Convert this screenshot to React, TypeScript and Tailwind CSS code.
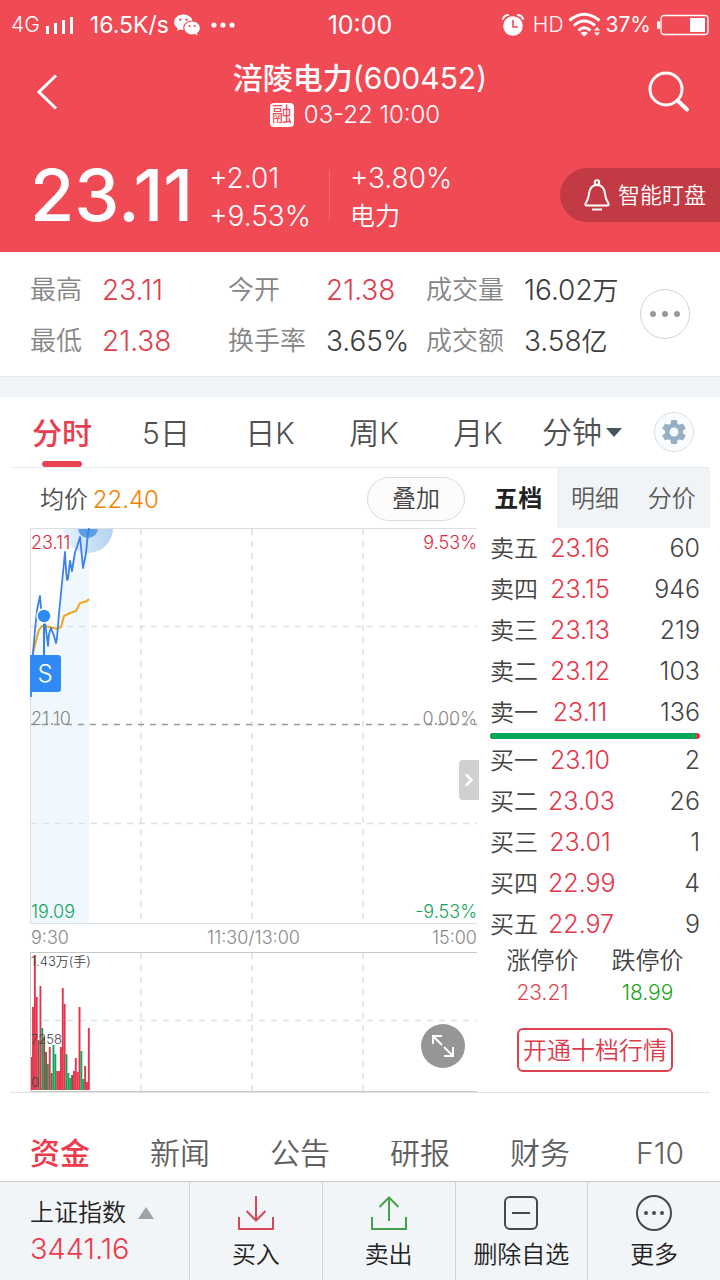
import React from "react";
import { MdSettings } from "react-icons/md";
import { RiWechatFill } from "react-icons/ri";

type Stat = { label: string; value: string; unit?: string; up?: boolean };

const stats: Stat[] = [
  { label: "最高", value: "23.11", up: true },
  { label: "今开", value: "21.38", up: true },
  { label: "成交量", value: "16.02", unit: "万" },
  { label: "最低", value: "21.38", up: true },
  { label: "换手率", value: "3.65%" },
  { label: "成交额", value: "3.58", unit: "亿" },
];

const asks = [
  ["卖五", "23.16", "60"],
  ["卖四", "23.15", "946"],
  ["卖三", "23.13", "219"],
  ["卖二", "23.12", "103"],
  ["卖一", "23.11", "136"],
];

const bids = [
  ["买一", "23.10", "2"],
  ["买二", "23.03", "26"],
  ["买三", "23.01", "1"],
  ["买四", "22.99", "4"],
  ["买五", "22.97", "9"],
];

const RED = "#e8334a";
const GREEN = "#12a45c";
const BROWN = "#8a5548";

const volumes: [number, string][] = [
  [33, RED], [83, RED], [135, RED], [93, RED], [50, BROWN], [104, RED], [62, GREEN], [53, BROWN],
  [38, BROWN], [26, GREEN], [43, RED], [17, BROWN], [45, GREEN], [36, GREEN], [19, RED], [19, RED],
  [43, RED], [102, RED], [86, RED], [36, GREEN], [17, GREEN], [12, GREEN], [15, BROWN], [19, RED],
  [32, RED], [18, RED], [83, RED], [39, GREEN], [11, GREEN], [24, RED], [8, RED], [62, RED],
];

const priceLine =
  "1,169 2,145 3,125 5,102 7,82 10,68 11,80 14,88 16,102 18,118 19,106 21,100 24,108 26,115 27,110 29,85 32,55 35,24 36,42 37,52 38,51 40,33 42,43 45,24 47,19 50,9 51,19 53,40 56,25 58,5 59,0";

function StatusBar() {
  return (
    <div className="grid h-[50px] grid-cols-[1fr_auto_1fr] items-center px-[11px] text-[23px] leading-[50px]">
      <div className="flex items-center">
        <span className="text-[21px] font-[350]">4G</span>
        <svg className="ml-1.5 mr-4" width="28" height="20" viewBox="0 0 28 20" fill="currentColor" aria-hidden="true">
          <rect x="0" y="11" width="3" height="8" />
          <rect x="8" y="8" width="3" height="11" />
          <rect x="16" y="5" width="3" height="14" />
          <rect x="24" y="2" width="3" height="17" />
        </svg>
        <span>16.5K/s</span>
        <RiWechatFill className="ml-1 size-7" />
        <svg className="ml-2.5" width="24" height="6" viewBox="0 0 24 6" fill="currentColor" aria-hidden="true">
          <circle cx="3" cy="3" r="2.6" />
          <circle cx="12" cy="3" r="2.6" />
          <circle cx="21" cy="3" r="2.6" />
        </svg>
      </div>
      <span className="text-[25px]">10:00</span>
      <div className="flex items-center justify-end">
        <svg width="24" height="24" viewBox="0 0 24 24" aria-hidden="true">
          <path d="M2 6Q3 2.500 7 2M22 6Q21 2.500 17 2" fill="none" stroke="currentColor" strokeWidth="2" strokeLinecap="round" />
          <circle cx="12" cy="13" r="9.800" fill="currentColor" />
          <path d="M12 7v7h5" fill="none" stroke="#f04a55" strokeWidth="1.600" />
        </svg>
        <span className="ml-2 text-[21px] font-[350]">HD</span>
        <svg className="ml-1" width="34" height="26" viewBox="0 0 34 26" aria-hidden="true">
          <g fill="none" stroke="currentColor" strokeWidth="3">
            <path d="M1.500 8.500Q16 -4 31.500 8.500" />
            <path d="M6 13.500Q16 4.500 27 13.500" />
            <path d="M10.500 18.500Q16 13 22.500 18.500" />
          </g>
          <path d="M12.500 21Q16 18.500 20 21L16.200 24.500Z" fill="currentColor" />
          <path d="M26 18.500h6L29 15zM26 20.500h6L29 24z" fill="currentColor" />
        </svg>
        <span className="ml-1 text-[21px]">37%</span>
        <svg className="ml-1.5" width="52" height="22" viewBox="0 0 52 22" aria-hidden="true">
          <rect x="0" y="7" width="3" height="8" rx="1.500" fill="currentColor" />
          <rect x="4" y="1.500" width="47" height="19" rx="3" fill="none" stroke="currentColor" strokeWidth="1.300" />
          <rect x="33" y="4" width="15" height="14" fill="currentColor" />
        </svg>
      </div>
    </div>
  );
}

function Header() {
  return (
    <header className="bg-[#f04a55] text-white">
      <StatusBar />
      <div className="flex h-[84px] items-center justify-between px-[30px]">
        <button type="button" aria-label="返回" className="flex w-[42px]">
          <svg width="34" height="40" viewBox="0 0 34 40" fill="none" stroke="currentColor" strokeWidth="3">
            <path d="M26 3.500L9 20L26 36.500" />
          </svg>
        </button>
        <div className="pt-2 text-center">
          <h1 className="text-[30px] font-medium leading-[38px]">
            涪陵电力<span className="font-normal">(600452)</span>
          </h1>
          <p className="flex items-center justify-center gap-2.5 pr-2.5 text-2xl font-[350] leading-9">
            <span className="flex size-6 items-center justify-center rounded-sm bg-white text-xl font-normal leading-6 text-[#f04a55]">融</span>
            03-22 10:00
          </p>
        </div>
        <button type="button" aria-label="搜索" className="flex w-[42px]">
          <svg width="42" height="42" viewBox="0 0 42 42" fill="none" stroke="currentColor">
            <circle cx="18" cy="18" r="16" strokeWidth="3" />
            <path d="M29.500 29.500L39 38.500" strokeWidth="4" strokeLinecap="round" />
          </svg>
        </button>
      </div>
      <div className="flex h-[118px] items-center pl-[30px] pt-1">
        <strong className="text-[72px] font-medium leading-[76px]">23.11</strong>
        <div className="ml-4 pt-1 text-[28px] font-[350] leading-[38px]">
          <p>+2.01</p>
          <p>+9.53%</p>
        </div>
        <div className="ml-[18px] h-12 w-px bg-white/20" />
        <div className="ml-5 pt-1 text-[28px] font-[350] leading-[38px]">
          <p>+3.80%</p>
          <p className="text-[25px]">电力</p>
        </div>
        <button type="button" className="ml-auto flex h-[54px] items-center gap-2 rounded-l-full bg-[#c23a44] pl-6 pr-3.5 text-[22px] font-[350]">
          <svg width="26" height="32" viewBox="0 0 26 32" fill="none" stroke="currentColor" strokeWidth="2" aria-hidden="true">
            <circle cx="13" cy="3.500" r="2.200" />
            <path d="M13 6C7.500 6 5.500 10.500 5 15C4.500 20 3 22 1.500 24.500Q.8 26.500 2.800 26.500H23.200Q25.200 26.500 24.500 24.500C23 22 21.500 20 21 15C20.500 10.500 18.500 6 13 6Z" />
            <path d="M8 30.500h10" />
          </svg>
          智能盯盘
        </button>
      </div>
    </header>
  );
}

function Stats() {
  return (
    <section className="flex h-[125px] items-center border-b border-[#e6eaee] px-[30px]">
      <dl className="grid flex-1 grid-cols-[72fr_126fr_98fr_100fr_98fr_116fr] pt-1 text-[26px] font-[350] leading-[50px]">
        {stats.map((s) => (
          <React.Fragment key={s.label}>
            <dt className="whitespace-nowrap text-[#858585]">{s.label}</dt>
            <dd className={s.up ? "text-[28px] text-[#e03c4c]" : "whitespace-nowrap text-[28px] text-[#3c3c3c]"}>
              {s.value}
              {s.unit && <span className="text-[26px]">{s.unit}</span>}
            </dd>
          </React.Fragment>
        ))}
      </dl>
      <button type="button" aria-label="更多指标" className="flex size-[50px] items-center justify-center rounded-full border border-[#d2d2d2]">
        <svg width="32" height="6" viewBox="0 0 32 6" fill="#999999">
          <circle cx="4" cy="3" r="3" />
          <circle cx="16" cy="3" r="3" />
          <circle cx="28" cy="3" r="3" />
        </svg>
      </button>
    </section>
  );
}

function PeriodTabs() {
  return (
    <nav className="mx-2.5 flex h-[71px] border-b border-[#e8ebed] text-[30px] font-[350] leading-[72px] text-[#505050]">
      <button type="button" className="flex flex-1 flex-col items-center font-medium text-[#ea3c4e]">
        <span className="h-16">分时</span>
        <span className="h-1.5 w-10 rounded-full bg-[#e84452]" />
      </button>
      {["5日", "日K", "周K", "月K"].map((t) => (
        <button type="button" key={t} className="flex-1">{t}</button>
      ))}
      <button type="button" className="flex flex-1 items-center justify-center gap-1 whitespace-nowrap">
        分钟
        <svg className="shrink-0" width="16" height="9" viewBox="0 0 16 9" fill="#455560"><path d="M0 0h16L8 9z" /></svg>
      </button>
      <div className="flex w-[76px] items-center justify-center pl-1">
        <button type="button" aria-label="设置" className="flex size-10 items-center justify-center rounded-full border border-[#d8dfe4] bg-[#f9fbfc] text-[#94b0c6]">
          <MdSettings className="size-[30px]" />
        </button>
      </div>
    </nav>
  );
}

function PriceChart() {
  return (
    <div className="relative text-[18px] font-[350] leading-5">
      <svg className="block w-full" viewBox="0 0 447 396" fill="none" role="img" aria-label="分时走势">
        <defs>
          <linearGradient id="halo" x1="0" y1="0" x2="1" y2="0">
            <stop offset="0" stopColor="#e4f2fc" />
            <stop offset="1" stopColor="#b4d2f0" />
          </linearGradient>
        </defs>
        <path d="M1 395V169L3 125L7 90L12 98L27 101L31 60L36 40L50 20L59 0V395Z" fill="#f0f8fd" />
        <circle cx="58" cy="0" r="25" fill="url(#halo)" />
        <circle cx="58" cy="0" r="10" fill="#5a9fe8" />
        <g stroke="#e0e0e0" strokeWidth="1.500" strokeDasharray="6 6">
          <path d="M111 1V395M222 1V395M333 1V395M1 98.500H447M1 295.500H447" />
        </g>
        <path d="M0 196.500H447" stroke="#999999" strokeWidth="1.500" strokeDasharray="6 6" />
        <path d="M0 .5H447M.5 0V395.500H447" stroke="#dcdfe1" />
        <polyline points="3,125 5,117 7,109 9,102 12,98 20,99 27,101 31,99 34,88 40,85 46,83 50,75 57,73 59,71" stroke="#f0a51e" strokeWidth="2" />
        <polyline points={priceLine} stroke="#3c82e6" strokeWidth="1.800" strokeLinejoin="round" />
        <path d="M14 88V130" stroke="#2e86d8" strokeWidth="2" />
        <circle cx="14" cy="88" r="7" fill="#2f8af0" stroke="#ffffff" strokeWidth="1.500" />
        <path d="M0 127H28Q31 127 31 130V161Q31 164 28 164H0Z" fill="#2f8af5" />
      </svg>
      <span className="absolute left-0 top-[127px] w-[30px] text-center text-2xl leading-[38px] text-white">S</span>
      <span className="absolute left-px top-[5px] text-[#dc2840]">23.11</span>
      <span className="absolute right-0 top-[5px] text-[#dc2840]">9.53%</span>
      <span className="absolute left-px top-[181px] text-[#888888]">21.10</span>
      <span className="absolute right-0 top-[181px] text-[#888888]">0.00%</span>
      <span className="absolute bottom-[2px] left-px text-[#12a45c]">19.09</span>
      <span className="absolute bottom-[2px] right-0 text-[#12a45c]">-9.53%</span>
      <button type="button" aria-label="收起盘口" className="absolute right-[-2px] top-[232px] flex h-10 w-5 items-center justify-center rounded-l bg-[#d0d0d0]">
        <svg width="10" height="14" viewBox="0 0 10 14" fill="none" stroke="#ffffff" strokeWidth="2.500"><path d="M2 1.500L7.500 7L2 12.500" /></svg>
      </button>
    </div>
  );
}

function VolumeChart() {
  return (
    <div className="relative text-[13px] font-[350] leading-4 text-[#444444]">
      <svg className="block w-full" viewBox="0 0 447 140" fill="none" role="img" aria-label="成交量">
        <path d="M111 1V139M222 1V139M333 1V139M1 68.500H447" stroke="#e0e0e0" strokeWidth="1.500" strokeDasharray="6 6" />
        {volumes.map(([h, color], i) => (
          <rect key={i} x={0.2 + i * 1.86} y={138 - h} width="1.900" height={h} fill={color} />
        ))}
        <path d="M0 .5H447M.5 0V139.500H447" stroke="#c8c8c8" />
      </svg>
      <span className="absolute left-px top-[1px]">1.43万(手)</span>
      <span className="absolute left-px top-[79px]">7258</span>
      <span className="absolute left-px top-[122px]">0</span>
      <button type="button" aria-label="全屏" className="absolute bottom-6 right-3 flex size-11 items-center justify-center rounded-full bg-[#969696]">
        <svg width="24" height="24" viewBox="0 0 24 24" fill="none" stroke="#ffffff" strokeWidth="2">
          <path d="M2 10V2h9M2 2l9 9M22 13v9h-9M22 22l-9 -9" />
        </svg>
      </button>
    </div>
  );
}

function BookTable({ rows, caption }: { rows: string[][]; caption: string }) {
  return (
    <table className="w-full text-[25px] font-[350]" aria-label={caption}>
      <tbody>
        {rows.map(([name, price, qty]) => (
          <tr key={name} className="h-[41px]">
            <th scope="row" className="w-[58px] p-0 text-left text-2xl font-[350] text-[#444444]">{name}</th>
            <td className="p-0 pt-px text-[#e63548]">
              <span className="inline-block w-[64px] text-center">{price}</span>
            </td>
            <td className="p-0 pt-px text-right text-[#444444]">{qty}</td>
          </tr>
        ))}
      </tbody>
    </table>
  );
}

function OrderBook() {
  return (
    <aside className="w-[230px] shrink-0">
      <div className="grid h-[60px] grid-cols-3 text-[24px] font-[350] leading-[62px] text-[#5c5c5c]">
        <button type="button" className="font-bold text-[#222222]">五档</button>
        <button type="button" className="h-[60px] bg-[#f0f4f7]">明细</button>
        <button type="button" className="h-[60px] bg-[#f0f4f7]">分价</button>
      </div>
      <div className="px-2.5">
        <BookTable rows={asks} caption="卖盘" />
        <div className="mb-px flex h-1.5 overflow-hidden rounded-full bg-[#e8334a]">
          <div className="mr-1 flex-1 bg-[#04a85a]" />
        </div>
        <BookTable rows={bids} caption="买盘" />
      </div>
      <dl className="grid grid-cols-2 px-2.5 text-center font-[350]">
        <div>
          <dt className="text-2xl leading-8 text-[#444444]">涨停价</dt>
          <dd className="text-[21px] leading-8 text-[#dc4452]">23.21</dd>
        </div>
        <div>
          <dt className="text-2xl leading-8 text-[#444444]">跌停价</dt>
          <dd className="text-[21px] leading-8 text-[#1ca51c]">18.99</dd>
        </div>
      </dl>
      <button type="button" className="mx-auto mt-[19px] block h-11 w-[156px] whitespace-nowrap rounded-md border-2 border-[#dc4452] pt-px text-center text-2xl font-[350] leading-10 text-[#dc3c4c]">
        开通十档行情
      </button>
    </aside>
  );
}

function NewsTabs() {
  return (
    <nav className="grid h-[88px] grid-cols-6 text-[30px] font-[350] leading-[121px] text-[#606060]">
      {["资金", "新闻", "公告", "研报", "财务", "F10"].map((t, i) => (
        <button type="button" key={t} className={i === 0 ? "h-[88px] font-medium text-[#ee3a4c]" : "h-[88px]"}>{t}</button>
      ))}
    </nav>
  );
}

function Footer() {
  const cell = "flex flex-1 flex-col items-center border-l border-[#cfd3d6] pt-3.5";
  return (
    <footer className="flex h-[99px] border-t border-[#cccccc] bg-[#f1f5f7] text-2xl font-[350] leading-8 text-[#222222]">
      <button type="button" className="w-[189px] pl-[30px] pt-1 text-left">
        <span className="flex items-center gap-3">
          上证指数
          <svg width="16" height="12" viewBox="0 0 16 12" fill="#a2a2a2"><path d="M8 0l8 12H0z" /></svg>
        </span>
        <span className="block text-[29px] leading-10 text-[#ee3a4c]">3441.16</span>
      </button>
      <button type="button" className={cell}>
        <svg width="36" height="34" viewBox="0 0 36 34" fill="none" stroke="#d6485a" strokeWidth="2">
          <path d="M18 0V25M8.500 15L18 24.500L27.500 15M1 21V33H35V21" />
        </svg>
        <span className="mt-[9px]">买入</span>
      </button>
      <button type="button" className={cell}>
        <svg width="36" height="34" viewBox="0 0 36 34" fill="none" stroke="#48a04c" strokeWidth="2">
          <path d="M18 25V1M8.500 11L18 1.500L27.500 11M1 21V33H35V21" />
        </svg>
        <span className="mt-[9px]">卖出</span>
      </button>
      <button type="button" className={cell}>
        <svg width="34" height="34" viewBox="0 0 34 34" fill="none" stroke="#484848" strokeWidth="2">
          <rect x="1" y="1" width="32" height="32" rx="5" />
          <path d="M8 17h18" />
        </svg>
        <span className="mt-[9px] whitespace-nowrap">删除自选</span>
      </button>
      <button type="button" className={cell}>
        <svg width="36" height="34" viewBox="0 0 36 34" fill="none" stroke="#484848" strokeWidth="2" className="overflow-visible">
          <circle cx="18" cy="17" r="17" />
          <g fill="#484848" stroke="none">
            <circle cx="10" cy="17" r="2" />
            <circle cx="18" cy="17" r="2" />
            <circle cx="26" cy="17" r="2" />
          </g>
        </svg>
        <span className="mt-[9px]">更多</span>
      </button>
    </footer>
  );
}

export default function App() {
  return (
    <div className="bg-white font-['Inter','Noto_Sans_CJK_SC',sans-serif]">
      <Header />
      <Stats />
      <div className="h-5 bg-[#f0f4f7]" />
      <PeriodTabs />
      <main className="mx-2.5 flex border-b border-[#e4e4e4]">
        <section className="min-w-0 flex-1 pl-5 pr-[3px]">
          <div className="flex h-[60px] items-center justify-between pl-2.5 pr-3 pt-px">
            <p className="pt-0.5 text-2xl font-[350] text-[#505050]">
              均价 <span className="-ml-0.5 text-[#f08200]">22.40</span>
            </p>
            <button type="button" className="h-11 w-[98px] rounded-full border border-[#dcdcdc] bg-[#fcfcfc] text-2xl font-[350] text-[#444444]">
              叠加
            </button>
          </div>
          <PriceChart />
          <div className="grid h-7 grid-cols-3 text-[18px] font-[350] leading-7 text-[#888888]">
            <span className="pl-px">9:30</span>
            <span className="text-center">11:30/13:00</span>
            <span className="text-right">15:00</span>
          </div>
          <VolumeChart />
        </section>
        <OrderBook />
      </main>
      <NewsTabs />
      <Footer />
    </div>
  );
}
